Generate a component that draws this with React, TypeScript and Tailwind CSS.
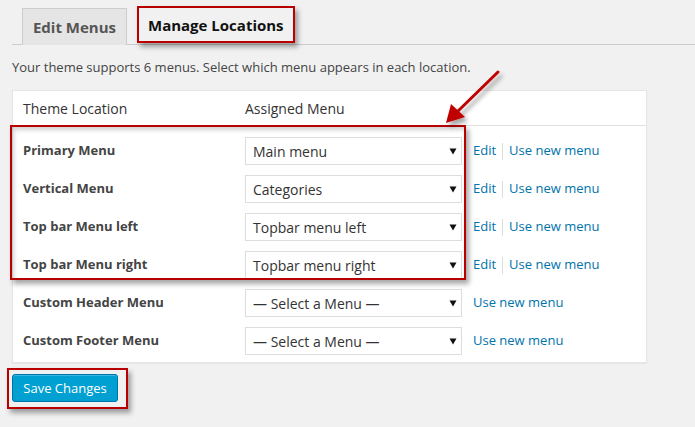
import React from "react";

const rows = [
  { label: "Primary Menu", value: "Main menu", edit: true },
  { label: "Vertical Menu", value: "Categories", edit: true },
  { label: "Top bar Menu left", value: "Topbar menu left", edit: true },
  { label: "Top bar Menu right", value: "Topbar menu right", edit: true },
  { label: "Custom Header Menu", value: "— Select a Menu —", edit: false },
  { label: "Custom Footer Menu", value: "— Select a Menu —", edit: false },
];

function Caret() {
  return (
    <svg width="8" height="7" viewBox="0 0 8 7" className="block">
      <path d="M0.5 0.5 L7.5 0.5 L4 6.5 Z" fill="#111" />
    </svg>
  );
}

export default function App() {
  return (
    <div
      className="relative w-[695px] h-[427px] overflow-hidden bg-[#f1f1f1] text-[#444]"
      style={{ fontFamily: '"Open Sans", "Noto Sans", sans-serif' }}
    >
      <div className="pl-[12px]">
        {/* Tabs */}
        <div className="flex items-end pt-[7px] border-b border-[#ccc] h-[45px]">
          <div className="ml-[10px] h-[37px] w-[105px] bg-[#e5e5e5] border border-b-0 border-[#ccc] flex items-center justify-center pt-[1px] text-[15px] font-bold text-[#555] -mb-px">
            Edit Menus
          </div>
          <div className="ml-[10px] h-[37px] w-[158px] bg-[#f1f1f1] border-2 border-[#b80000] shadow-[3px_4px_5px_rgba(0,0,0,0.35)] flex items-center pl-[9px] pt-[2px] text-[15px] font-bold text-[#111] mb-[1px]">
            Manage Locations
          </div>
        </div>

        <p className="mt-[12px] text-[13px] leading-[20px] text-[#444]">
          Your theme supports 6 menus. Select which menu appears in each location.
        </p>

        {/* Table */}
        <div className="mt-[13px] w-[635px] bg-white border border-[#e5e5e5] shadow-[0_1px_1px_rgba(0,0,0,0.04)]">
          <div className="h-[35px] flex items-center border-b border-[#e1e1e1] text-[14px] text-[#333]">
            <div className="w-[232px] pl-[10px]">Theme Location</div>
            <div>Assigned Menu</div>
          </div>
          <div className="pt-[6px] pb-[2px]">
            {rows.map((r) => (
              <div key={r.label} className="h-[38px] flex items-center">
                <div className="w-[232px] pl-[10px] text-[13px] font-bold text-[#444]">
                  {r.label}
                </div>
                <div className="w-[217px] h-[28px] border border-[#ddd] bg-white flex items-center justify-between pl-[7px] pr-[4px] text-[14px] text-[#333]">
                  <span>{r.value}</span>
                  <Caret />
                </div>
                <div className="ml-[11px] flex items-center text-[13px] text-[#0073aa]">
                  {r.edit && (
                    <>
                      <span>Edit</span>
                      <span className="mx-[6px] w-px h-[17px] bg-[#ddd]" />
                    </>
                  )}
                  <span>Use new menu</span>
                </div>
              </div>
            ))}
          </div>
        </div>

        {/* Save button */}
        <div className="mt-[11px]">
          <button className="h-[28px] w-[106px] bg-[#00a0d2] border border-[#0073aa] rounded-[3px] text-white text-[13px] flex items-center justify-center pt-[1px] shadow-[inset_0_1px_0_rgba(120,200,230,0.5)]">
            Save Changes
          </button>
        </div>
      </div>

      {/* Annotations */}
      <div className="absolute left-[10px] top-[125px] w-[456px] h-[155px] border-2 border-[#b80000] shadow-[3px_4px_5px_rgba(0,0,0,0.35),inset_2px_3px_4px_rgba(0,0,0,0.18)] pointer-events-none" />
      <div className="absolute left-[7px] top-[368px] w-[121px] h-[41px] border-2 border-[#b80000] shadow-[3px_4px_5px_rgba(0,0,0,0.35)] pointer-events-none" />

      <svg
        className="absolute left-0 top-0 pointer-events-none"
        width="695"
        height="427"
        viewBox="0 0 695 427"
      >
        <defs>
          <filter id="sh" x="-50%" y="-50%" width="200%" height="200%">
            <feDropShadow dx="3" dy="4" stdDeviation="2" floodColor="#000" floodOpacity="0.35" />
          </filter>
        </defs>
        <g filter="url(#sh)">
          <line x1="498" y1="72" x2="456" y2="113" stroke="#c00000" strokeWidth="3" strokeLinecap="round" />
          <path d="M446 123 L451 104 L465 117 Z" fill="#c00000" />
        </g>
      </svg>
    </div>
  );
}
